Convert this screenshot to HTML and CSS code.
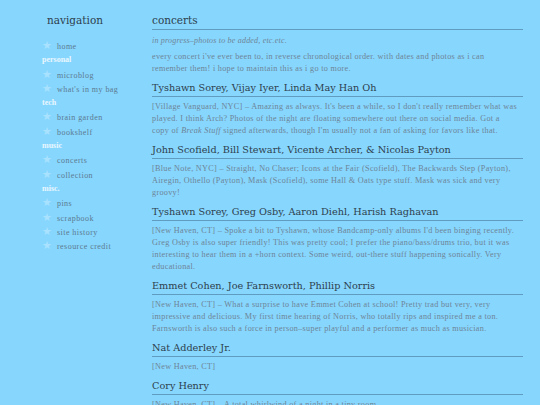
FILE: index.html
```html
<!DOCTYPE html>
<html lang="en">
<head>
<meta charset="utf-8">
<title>concerts</title>
<link rel="stylesheet" href="styles.css">
</head>
<body>
<div class="page">
  <nav class="sidebar">
    <h2 class="nav-title">navigation</h2>
    <ul class="nav-list">
      <li class="nav-link"><span class="star">★</span>home</li>
      <li class="nav-cat">personal</li>
      <li class="nav-link"><span class="star">★</span>microblog</li>
      <li class="nav-link"><span class="star">★</span>what's in my bag</li>
      <li class="nav-cat">tech</li>
      <li class="nav-link"><span class="star">★</span>brain garden</li>
      <li class="nav-link"><span class="star">★</span>bookshelf</li>
      <li class="nav-cat">music</li>
      <li class="nav-link"><span class="star">★</span>concerts</li>
      <li class="nav-link"><span class="star">★</span>collection</li>
      <li class="nav-cat">misc.</li>
      <li class="nav-link"><span class="star">★</span>pins</li>
      <li class="nav-link"><span class="star">★</span>scrapbook</li>
      <li class="nav-link"><span class="star">★</span>site history</li>
      <li class="nav-link"><span class="star">★</span>resource credit</li>
    </ul>
  </nav>
  <main class="content">
    <h1 class="page-title">concerts</h1>
    <p class="note"><em>in progress–photos to be added, etc.etc.</em></p>
    <p class="text">every concert i've ever been to, in reverse chronological order. with dates and photos as i can remember them! i hope to maintain this as i go to more.</p>

    <h2 class="show">Tyshawn Sorey, Vijay Iyer, Linda May Han Oh</h2>
    <p class="text">[Village Vanguard, NYC] – Amazing as always. It's been a while, so I don't really remember what was played. I think Arch? Photos of the night are floating somewhere out there on social media. Got a copy of <em>Break Stuff</em> signed afterwards, though I'm usually not a fan of asking for favors like that.</p>

    <h2 class="show">John Scofield, Bill Stewart, Vicente Archer, &amp; Nicolas Payton</h2>
    <p class="text">[Blue Note, NYC] – Straight, No Chaser; Icons at the Fair (Scofield), The Backwards Step (Payton), Airegin, Othello (Payton), Mask (Scofield), some Hall &amp; Oats type stuff. Mask was sick and very groovy!</p>

    <h2 class="show">Tyshawn Sorey, Greg Osby, Aaron Diehl, Harish Raghavan</h2>
    <p class="text">[New Haven, CT] – Spoke a bit to Tyshawn, whose Bandcamp-only albums I'd been binging recently. Greg Osby is also super friendly! This was pretty cool; I prefer the piano/bass/drums trio, but it was interesting to hear them in a +horn context. Some weird, out-there stuff happening sonically. Very educational.</p>

    <h2 class="show">Emmet Cohen, Joe Farnsworth, Phillip Norris</h2>
    <p class="text">[New Haven, CT] – What a surprise to have Emmet Cohen at school! Pretty trad but very, very impressive and delicious. My first time hearing of Norris, who totally rips and inspired me a ton. Farnsworth is also such a force in person–super playful and a performer as much as musician.</p>

    <h2 class="show">Nat Adderley Jr.</h2>
    <p class="text">[New Haven, CT]</p>

    <h2 class="show">Cory Henry</h2>
    <p class="text">[New Haven, CT] – A total whirlwind of a night in a tiny room.</p>
  </main>
</div>
</body>
</html>
```
FILE: styles.css
```css
html, body {
  margin: 0;
  padding: 0;
  background: #87d6fe;
}
body {
  font-family: "Liberation Serif", serif;
  color: #6d8596;
  overflow: hidden;
}
.page {
  display: flex;
  align-items: flex-start;
}
.sidebar {
  width: 150px;
  flex: none;
  padding-top: 12px;
}
.nav-title {
  margin: 0;
  text-align: center;
  font-family: "DejaVu Serif", serif;
  font-weight: normal;
  font-size: 10.5px;
  line-height: 16px;
  color: #2d3e4c;
}
.nav-list {
  list-style: none;
  margin: 11px 0 0;
  padding: 0 0 0 42px;
}
.nav-list li {
  height: 14.3px;
  line-height: 14.3px;
  font-size: 8px;
  white-space: nowrap;
}
.nav-link {
  color: #5b7a8f;
  letter-spacing: 0.45px;
}
.nav-cat {
  color: #eaf7ff;
  font-weight: bold;
  font-size: 7.5px;
}
.star {
  display: inline-block;
  width: 15px;
  color: #a9e2ff;
  font-size: 11px;
  font-family: "DejaVu Sans", sans-serif;
  text-align: left;
  letter-spacing: 0;
}
.content {
  width: 371px;
  padding: 12px 0 0 2px;
}
.page-title {
  margin: 0;
  font-family: "DejaVu Serif", serif;
  font-weight: normal;
  font-size: 10.5px;
  line-height: 16px;
  color: #2d3e4c;
  padding-bottom: 1px;
  border-bottom: 1px solid #5f9cc0;
}
.note {
  margin: 5px 0 0;
  font-size: 8px;
  line-height: 12px;
  letter-spacing: 0.2px;
}
.text {
  margin: 4px 0 6px;
  padding-right: 5px;
  font-size: 8.2px;
  line-height: 12px;
  letter-spacing: 0.3px;
}
.show {
  margin: 0;
  font-family: "DejaVu Serif", serif;
  font-weight: normal;
  font-size: 9.7px;
  line-height: 14px;
  color: #2d3e4c;
  padding-bottom: 1px;
  border-bottom: 1px solid #5f9cc0;
}
```
